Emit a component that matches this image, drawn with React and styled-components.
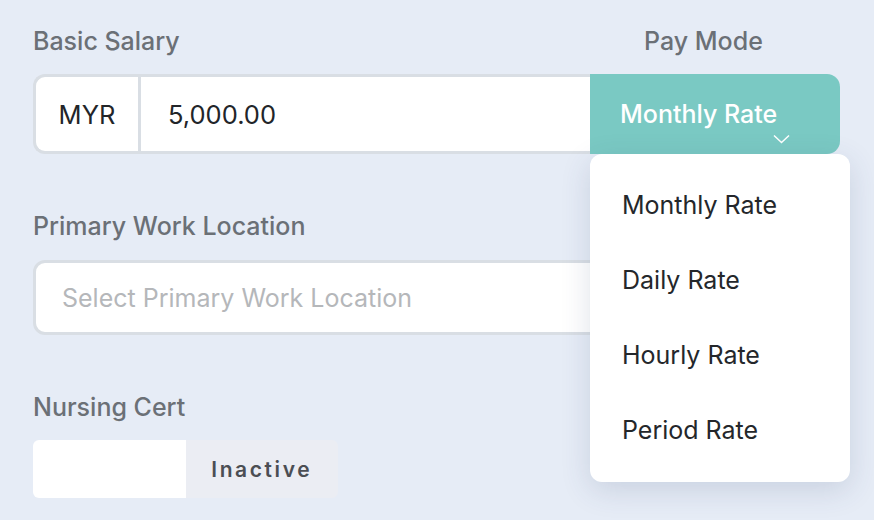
import styled, { createGlobalStyle } from "styled-components"

const GlobalStyle = createGlobalStyle`
    html, body {
        margin: 0;
        padding: 0;
        background: #e6ecf6;
        font-family: Inter, "Liberation Sans", sans-serif;
    }
`

const Page = styled.div`
    width: 874px;
    height: 520px;
    box-sizing: border-box;
    padding: 26px 34px 0 33px;
    overflow: hidden;
`

const Field = styled.div`
    margin-bottom: 57px;
`

const Label = styled.div`
    font-size: 25px;
    line-height: 30px;
    font-weight: 500;
    color: #6b7076;
    margin-bottom: ${({ $gap }) => $gap || 18}px;
    padding-left: ${({ $indent }) => $indent || 0}px;
`

const SalaryRow = styled.div`
    display: grid;
    grid-template-columns: 1fr 250px;
`

const InputGroup = styled.div`
    display: flex;
    height: 80px;
    box-sizing: border-box;
    background: #fff;
    border: 3px solid #d9dee4;
    border-right: none;
    border-radius: 12px 0 0 12px;
`

const Currency = styled.div`
    width: 102px;
    display: flex;
    align-items: center;
    justify-content: center;
    border-right: 3px solid #d9dee4;
    font-size: 25.5px;
    color: #222529;
`

const Value = styled.div`
    flex: 1;
    display: flex;
    align-items: center;
    padding-left: 27px;
    font-size: 25.5px;
    color: #222529;
`

const SelectWrap = styled.div`
    position: relative;
`

const SelectButton = styled.div`
    position: relative;
    height: 80px;
    box-sizing: border-box;
    display: flex;
    align-items: center;
    padding-left: 30px;
    background: #7ac9c3;
    border-radius: 0 13px 13px 0;
    color: #fff;
    font-size: 25px;
    font-weight: 500;
`

const Chevron = styled.svg`
    position: absolute;
    left: 183px;
    top: 60px;
`

const Menu = styled.div`
    position: absolute;
    top: 100%;
    left: 0;
    width: 260px;
    box-sizing: border-box;
    padding: 13px 0 15px;
    background: #fff;
    border-radius: 12px;
    box-shadow: 0 8px 30px rgba(50, 70, 110, 0.16);
    z-index: 2;
`

const MenuItem = styled.div`
    height: 75px;
    display: flex;
    align-items: center;
    padding-left: 32px;
    font-size: 25px;
    color: #24272b;
`

const TextInput = styled.div`
    height: 75px;
    box-sizing: border-box;
    display: flex;
    align-items: center;
    padding-left: 26px;
    background: #fff;
    border: 3px solid #d9dee4;
    border-radius: 12px;
    font-size: 25px;
    color: #b5b7ba;
`

const Toggle = styled.div`
    display: flex;
    width: 305px;
    height: 58px;
`

const ToggleHalf = styled.div`
    flex: 1;
    display: flex;
    align-items: center;
    justify-content: center;
    background: ${({ $active }) => ($active ? "#ffffff" : "#ebedf3")};
    border-radius: ${({ $side }) => ($side === "left" ? "6px 0 0 6px" : "0 6px 6px 0")};
    font-size: 21px;
    font-weight: 600;
    letter-spacing: 2.6px;
    color: #4b4e53;
`

const payModes = ["Monthly Rate", "Daily Rate", "Hourly Rate", "Period Rate"]

export default function App() {
    return (
        <Page>
            <GlobalStyle />
            <Field>
                <SalaryRow>
                    <div>
                        <Label>Basic Salary</Label>
                        <InputGroup>
                            <Currency>MYR</Currency>
                            <Value>5,000.00</Value>
                        </InputGroup>
                    </div>
                    <SelectWrap>
                        <Label $indent={54}>Pay Mode</Label>
                        <SelectButton>
                            Monthly Rate
                            <Chevron width="17" height="10" viewBox="0 0 17 10" fill="none">
                                <path d="M1 1.5 L8.5 8.5 L16 1.5" stroke="#fff" strokeWidth="1.5" />
                            </Chevron>
                        </SelectButton>
                        <Menu>
                            {payModes.map((m) => (
                                <MenuItem key={m}>{m}</MenuItem>
                            ))}
                        </Menu>
                    </SelectWrap>
                </SalaryRow>
            </Field>

            <Field>
                <Label $gap={19}>Primary Work Location</Label>
                <TextInput>Select Primary Work Location</TextInput>
            </Field>

            <Field>
                <Label>Nursing Cert</Label>
                <Toggle>
                    <ToggleHalf $active $side="left" />
                    <ToggleHalf $side="right">Inactive</ToggleHalf>
                </Toggle>
            </Field>
        </Page>
    )
}
